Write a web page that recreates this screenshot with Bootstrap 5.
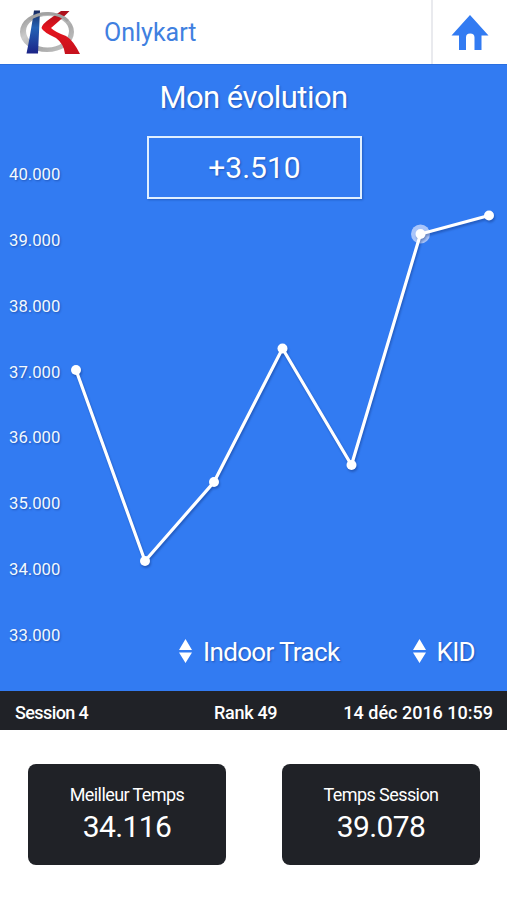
<!DOCTYPE html>
<html lang="fr">
<head>
<meta charset="utf-8">
<meta name="viewport" content="width=device-width, initial-scale=1">
<title>Onlykart</title>
<link href="https://cdn.jsdelivr.net/npm/bootstrap@5.3.0/dist/css/bootstrap.min.css" rel="stylesheet">
<style>
body{font-family:Roboto,"Liberation Sans",sans-serif;background:#fff;color:#fff;height:900px;overflow:hidden}
.topbar{height:65px;border-bottom:1px solid #2a6fe0}
.brand-logo{margin-left:17px}
.brand-name{color:#4080e0;font-size:25px;margin-left:21px;line-height:30px;padding-top:2px}
.home-link{width:76px;border-left:2px solid #e9eaee}
.evolution{height:626px;background:#327bf2;text-shadow:1px 1px 2px rgba(10,40,110,.45)}
.evo-title{font-size:31px;line-height:36px;padding-top:15px;font-weight:400;letter-spacing:-.55px}
.evo-delta{width:215px;height:63px;margin:20px 0 0 2px;border:2px solid #e0efff;font-size:30px;box-shadow:1px 1px 2px rgba(10,40,110,.35)}
.axis-text{font-size:16.7px;fill:#f2f9ff}
.filters{font-size:26px;line-height:30px;letter-spacing:-.65px;padding:0 32px 24px 179px}
.filters svg{margin:0 11px 3px 0}
.session-bar{height:39px;background:#202227;font-size:18px;padding:4px 14px 0 15px}
.session-bar span{line-height:36px;font-weight:500}
.session-no{width:199px;letter-spacing:-.6px}
.session-rank{letter-spacing:-.3px}
.times{padding:34px 27px 0 28px}
.time-card{width:198px;height:101px;border-radius:8px;background:#202227;padding-top:18px}
.time-label{font-size:18px;line-height:26px;letter-spacing:-.58px}
.time-value{font-size:30px;line-height:36px;margin-top:1px;letter-spacing:-.6px}
</style>
</head>
<body>
<header class="topbar d-flex align-items-stretch">
  <div class="d-flex align-items-center flex-grow-1">
    <svg class="brand-logo" width="66" height="52" viewBox="17 7 66 52" aria-label="Onlykart">
      <defs>
        <linearGradient id="ring" x1="0" y1="0" x2="1" y2="1"><stop offset="0" stop-color="#888"/><stop offset=".35" stop-color="#ccc"/><stop offset=".65" stop-color="#aaa"/><stop offset="1" stop-color="#ccc"/></linearGradient>
        <linearGradient id="blue" x1="0" y1="0" x2="0" y2="1"><stop offset="0" stop-color="#17295f"/><stop offset=".4" stop-color="#2563b5"/><stop offset="1" stop-color="#1b2387"/></linearGradient>
        <linearGradient id="red" x1="0" y1="0" x2="0" y2="1"><stop offset="0" stop-color="#a5101c"/><stop offset=".4" stop-color="#e5141d"/><stop offset="1" stop-color="#c6121e"/></linearGradient>
      </defs>
      <path fill-rule="evenodd" d="M20 33a27 20 0 1 0 54 0a27 20 0 1 0-54 0zM26 32a21.500 15 0 1 1 43 0a21.500 16.500 0 1 1-43 0z" fill="url(#ring)"/>
      <path d="M34 11.500h6L38 54.500H26.500Q30 38 34 11.500z" fill="url(#blue)"/>
      <path d="M61 12h8.500Q64 18 51 29Q55 33 66 37Q73 41 80 55H65Q64 45 56 39Q43 33 41.500 29Q42 25 51 19z" fill="url(#red)"/>
      <path d="M29 20.500Q37 14.500 48 14.500Q61 15 68 22" fill="none" stroke="#a2a2a2" stroke-width="2.800"/>
    </svg>
    <span class="brand-name">Onlykart</span>
  </div>
  <a class="home-link d-flex align-items-center justify-content-center" href="#" aria-label="Accueil">
    <svg width="38" height="36" viewBox="0 0 38 36"><path d="M19 0L37.500 20.500H30.500V35H23.500V22.500Q23.500 18.500 19.200 18.500T15 22.500V35H8V20.500H.5z" fill="#327bf2" transform="translate(0 1)"/></svg>
  </a>
</header>

<main>
  <section class="evolution position-relative d-flex flex-column align-items-center">
    <svg class="position-absolute top-0 start-0" width="507" height="626" viewBox="0 65 507 626">
      <g class="axis-text">
        <text x="9" y="180">40.000</text><text x="9" y="246">39.000</text>
        <text x="9" y="312">38.000</text><text x="9" y="378">37.000</text>
        <text x="9" y="443">36.000</text><text x="9" y="509">35.000</text>
        <text x="9" y="575">34.000</text><text x="9" y="641">33.000</text>
      </g>
      <circle cx="420.500" cy="234" r="9.500" fill="#a9c5fa"/>
      <g style="filter:drop-shadow(1px 2px 1px rgba(10,40,110,.4))">
        <polyline points="76,370 145,561 214,482 282.500,348.500 351.500,465 420.500,234 489,215.500" fill="none" stroke="#fff" stroke-width="3.200"/>
        <g fill="#fff"><circle cx="76" cy="370" r="5"/><circle cx="145" cy="561" r="5"/><circle cx="214" cy="482" r="5"/><circle cx="282.500" cy="348.500" r="5"/><circle cx="351.500" cy="465" r="5"/><circle cx="420.500" cy="234" r="5"/><circle cx="489" cy="215.500" r="5"/></g>
      </g>
    </svg>
    <h1 class="evo-title mb-0">Mon évolution</h1>
    <div class="evo-delta d-flex align-items-center justify-content-center">+3.510</div>
    <div class="filters d-flex justify-content-between w-100 mt-auto">
      <div class="d-flex align-items-center"><svg width="13" height="24" viewBox="0 0 13 24" fill="#fff"><path d="M6.500 0L13 11H0zM0 13.500H13L6.500 24z"/></svg><span>Indoor Track</span></div>
      <div class="d-flex align-items-center"><svg width="13" height="24" viewBox="0 0 13 24" fill="#fff"><path d="M6.500 0L13 11H0zM0 13.500H13L6.500 24z"/></svg><span>KID</span></div>
    </div>
  </section>

  <section class="session-bar d-flex">
    <span class="session-no">Session 4</span><span class="session-rank">Rank 49</span><span class="ms-auto">14 déc 2016 10:59</span>
  </section>

  <section class="times d-flex justify-content-between text-center">
    <div class="time-card"><div class="time-label">Meilleur Temps</div><div class="time-value">34.116</div></div>
    <div class="time-card"><div class="time-label">Temps Session</div><div class="time-value">39.078</div></div>
  </section>
</main>
<script src="https://cdn.jsdelivr.net/npm/bootstrap@5.3.0/dist/js/bootstrap.bundle.min.js"></script>
</body>
</html>
